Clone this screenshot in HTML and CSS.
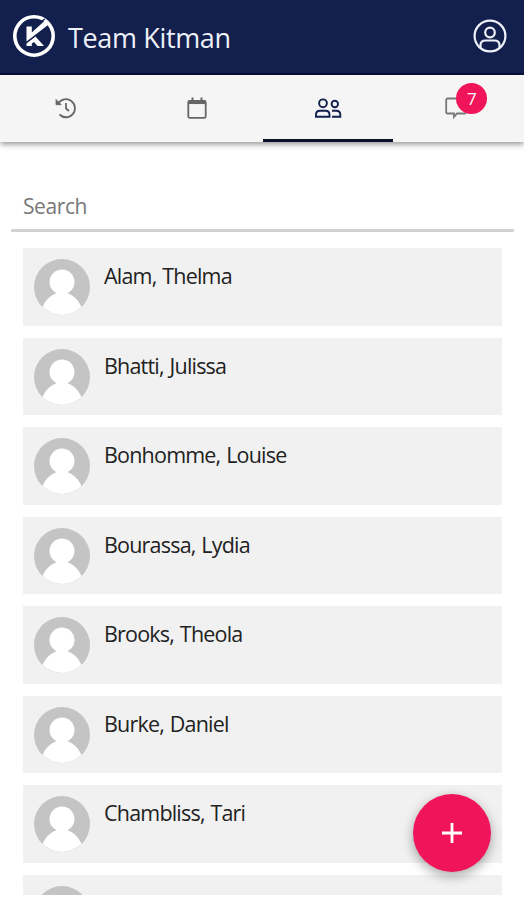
FILE: index.html
```html
<!DOCTYPE html>
<html lang="en">
<head>
    <meta charset="utf-8">
    <title>Team Kitman</title>
    <link rel="stylesheet" href="styles.css">
</head>
<body>
    <header class="header">
        <svg class="logo" viewBox="0 0 44 44">
            <circle cx="22" cy="22" r="19.2" fill="none" stroke="#fff" stroke-width="3.6"/>
            <path d="M28.5 8 33 5" stroke="#13204d" stroke-width="1.5"/>
            <path d="M14.5 12.5h5.3v6L33 6.5l4 3.8L14.5 27.5z" fill="#fff"/>
            <path d="M14.5 29.5l9-7L32 32h-6.500l-3.500-4-2.200 1.500V32h-5.300z" fill="#fff"/>
        </svg>
        <h1>Team Kitman</h1>
        <svg class="profile" viewBox="0 0 34 34" fill="none" stroke="#eef1f8" stroke-width="2.2">
            <circle cx="17" cy="17" r="15.4"/>
            <circle cx="17" cy="13.5" r="4.8"/>
            <path d="M7.5 28.5v-2.200c0-3 2-4.800 5-4.800h9c3 0 5 1.800 5 4.800v2.200"/>
        </svg>
    </header>
    <nav class="tabs">
        <a class="tab">
            <svg width="22" height="22" viewBox="0 0 22 22" fill="none" stroke="#666" stroke-width="1.8">
                <path d="M3.3 6.5A9 9 0 1 1 4.5 17.5"/>
                <path d="M11 6v5.5l3 2.5"/>
                <path d="M1 2.5v5.2h5.2z" fill="#666" stroke-width="0.8"/>
            </svg>
        </a>
        <a class="tab">
            <svg width="20" height="22" viewBox="0 0 20 22" fill="none" stroke="#666" stroke-width="1.8">
                <rect x="1.3" y="3.9" width="17.4" height="17" rx="1.5"/>
                <path d="M1 5.3h18" stroke-width="3.5"/>
                <path d="M5.5 0.5v4M14.5 0.5v4" stroke-width="2"/>
            </svg>
        </a>
        <a class="tab active">
            <svg width="28" height="20" viewBox="0 0 28 20" fill="none" stroke="#13204d" stroke-width="1.9">
                <circle cx="9" cy="5.3" r="3.9"/>
                <circle cx="20.8" cy="6" r="3.2"/>
                <path d="M2 18.700v-2c0-2.500 1.500-3.900 4-3.900h5.500c2.500 0 4 1.400 4 3.900v2z"/>
                <path d="M18 12.800h4.300c2.500 0 4 1.400 4 3.900v2h-8.300"/>
            </svg>
        </a>
        <a class="tab">
            <svg class="chat" width="22" height="22" viewBox="0 0 22 22" fill="none" stroke="#777" stroke-width="1.8">
                <path d="M2.500 1.500h17a1.300 1.300 0 0 1 1.300 1.300v12.400a1.300 1.300 0 0 1-1.300 1.300h-7.500l-3 3.500v-3.500h-6.500a1.300 1.300 0 0 1-1.300-1.300V2.800a1.300 1.300 0 0 1 1.300-1.300z"/>
            </svg>
            <span class="badge">7</span>
        </a>
    </nav>
    <main class="content">
        <input class="search-input" type="text" placeholder="Search">
        <div class="athletes" id="athletes"></div>
    </main>
    <button class="add-button" aria-label="Add">
        <svg width="20" height="20" viewBox="0 0 20 20" stroke="#fff" stroke-width="2.8">
            <path d="M10 0v20M0 10h20"/>
        </svg>
    </button>
    <script>
        const names = ['Alam, Thelma', 'Bhatti, Julissa', 'Bonhomme, Louise', 'Bourassa, Lydia',
            'Brooks, Theola', 'Burke, Daniel', 'Chambliss, Tari', 'Chisman, Robert'];
        const athletes = document.getElementById('athletes');

        names.forEach(name => {
            const row = document.createElement('div');
            row.className = 'athlete';
            row.innerHTML = `
                <svg class="avatar" viewBox="0 0 56 56">
                    <circle cx="28" cy="28" r="28" fill="#c4c4c4"/>
                    <circle cx="28" cy="23" r="12.5" fill="#fff"/>
                    <path d="M8.5 48C12 40 17 36.5 22 34.5v-4h12v4C39 36.5 44 40 47.5 48A28 28 0 0 1 8.5 48z" fill="#fff"/>
                </svg>
                <span class="name">${name}</span>
            `;
            athletes.appendChild(row);
        });
    </script>
</body>
</html>
```
FILE: styles.css
```css
* {
    box-sizing: border-box;
}

body {
    margin: 0;
    height: 900px;
    overflow: hidden;
    background-color: #fff;
    font-family: "Open Sans", "Noto Sans", sans-serif;
    color: #222;
}

.header {
    display: flex;
    align-items: center;
    height: 75px;
    padding: 1px 17px 2px 12px;
    background-color: #13204d;
    border-bottom: 2px solid #08103c;
}

.header h1 {
    flex: 1;
    margin: 3px 0 0 12px;
    color: #eef1f8;
    font-size: 27px;
    font-weight: 400;
    letter-spacing: -0.35px;
    line-height: 36px;
}

.logo {
    width: 44px;
    height: 44px;
}

.profile {
    width: 34px;
    height: 34px;
}

.tabs {
    display: flex;
    height: 67px;
    padding-left: 1px;
    background-color: #f5f5f5;
    box-shadow: 0 2px 6px rgba(0, 0, 0, 0.45);
}

.tab {
    display: flex;
    flex: 1;
    align-items: center;
    justify-content: center;
    position: relative;
    padding-top: 2px;
    border-bottom: 3px solid transparent;
}

.tab.active {
    border-bottom-color: #0d1029;
}

.chat {
    margin-right: 6px;
}

.badge {
    position: absolute;
    top: 8px;
    left: 63px;
    width: 31px;
    height: 31px;
    border-radius: 50%;
    background-color: #f0145a;
    color: #fff;
    font-size: 17px;
    line-height: 31px;
    text-align: center;
}

.content {
    height: 753px;
    padding: 39px 10px 0 11px;
    overflow: hidden;
}

.search-input {
    display: block;
    width: 100%;
    height: 51px;
    padding: 1px 12px 0;
    border: none;
    border-bottom: 3px solid #d2d2d2;
    background: none;
    font-family: inherit;
    font-size: 21px;
    letter-spacing: -0.4px;
}

.search-input::placeholder {
    color: #777;
    opacity: 1;
}

.athletes {
    padding: 16px 12px 0;
}

.athlete {
    display: flex;
    align-items: flex-start;
    height: 77.5px;
    margin-bottom: 12px;
    padding: 11px;
    background-color: #f1f1f1;
}

.avatar {
    flex: none;
    width: 56px;
    height: 56px;
}

.name {
    margin: 2px 0 0 14px;
    font-size: 21.5px;
    letter-spacing: -0.8px;
    word-spacing: 1px;
    line-height: 30px;
}

.add-button {
    position: fixed;
    right: 33px;
    bottom: 28px;
    display: flex;
    align-items: center;
    justify-content: center;
    width: 78px;
    height: 78px;
    padding: 0;
    border: none;
    border-radius: 50%;
    background-color: #f0145a;
    box-shadow: 0 4px 12px rgba(0, 0, 0, 0.35);
}
```
